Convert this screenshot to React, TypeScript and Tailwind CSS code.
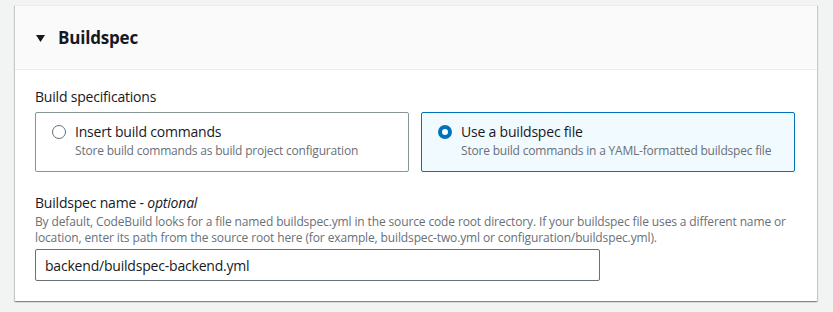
import React from 'react';

const font = { fontFamily: '"Open Sans", "Noto Sans", sans-serif' };

const options = [
  { id: 'commands', title: 'Insert build commands', desc: 'Store build commands as build project configuration' },
  { id: 'file', title: 'Use a buildspec file', desc: 'Store build commands in a YAML-formatted buildspec file' },
];

export default function App() {
  const selected = 'file';

  return (
    <div className="w-[833px] h-[312px] bg-[#f2f3f3] pt-[5px] pl-[15px] text-[#16191f] tracking-[-0.2px]" style={font}>
      <div className="w-[802px] bg-white shadow-[0_1px_1px_0_rgba(0,28,36,0.3),1px_1px_1px_0_rgba(0,28,36,0.15),-1px_1px_1px_0_rgba(0,28,36,0.15)] border-t border-[#eaeded]">
        {/* Header */}
        <div className="h-[64px] bg-[#fafafa] border-b border-[#eaeded] flex items-center pl-[21px] gap-[13px]">
          <svg width="9" height="7" viewBox="0 0 9 7" className="mt-[1px]">
            <path d="M0 0 H9 L4.5 7 Z" fill="#16191f" />
          </svg>
          <span className="text-[17px] font-bold leading-[22px] tracking-[-0.2px]">Buildspec</span>
        </div>

        {/* Body */}
        <div className="px-[20px] pt-[16px] pb-[20px]">
          <div className="text-[14px] leading-[22px] mb-[4px]">Build specifications</div>
          <div className="grid grid-cols-2 gap-[12px] w-[760px]">
            {options.map((o) => {
              const active = o.id === selected;
              return (
                <div
                  key={o.id}
                  className={`h-[60px] border rounded-[2px] pl-[16px] pt-[8px] flex gap-[9px] ${
                    active ? 'border-[#0073bb] bg-[#f1faff]' : 'border-[#879596] bg-white'
                  }`}
                >
                  <div className="pt-[4px]">
                    {active ? (
                      <div className="w-[14px] h-[14px] rounded-full border-[4px] border-[#0073bb] bg-white" />
                    ) : (
                      <div className="w-[14px] h-[14px] rounded-full border border-[#687078] bg-white" />
                    )}
                  </div>
                  <div>
                    <div className="text-[14px] leading-[22px]">{o.title}</div>
                    <div className="text-[12px] leading-[16px] text-[#687078]">{o.desc}</div>
                  </div>
                </div>
              );
            })}
          </div>

          <div className="mt-[20px] text-[14px] leading-[22px]">
            Buildspec name - <i>optional</i>
          </div>
          <div className="text-[12px] leading-[16px] text-[#687078] whitespace-nowrap tracking-[-0.13px]">
            By default, CodeBuild looks for a file named buildspec.yml in the source code root directory. If your buildspec file uses a different name or
            <br />
            location, enter its path from the source root here (for example, buildspec-two.yml or configuration/buildspec.yml).
          </div>
          <input
            className="mt-[3px] w-[565px] h-[32px] border border-[#687078] rounded-[2px] px-[9px] text-[14px] outline-none"
            defaultValue="backend/buildspec-backend.yml"
          />
        </div>
      </div>
    </div>
  );
}
